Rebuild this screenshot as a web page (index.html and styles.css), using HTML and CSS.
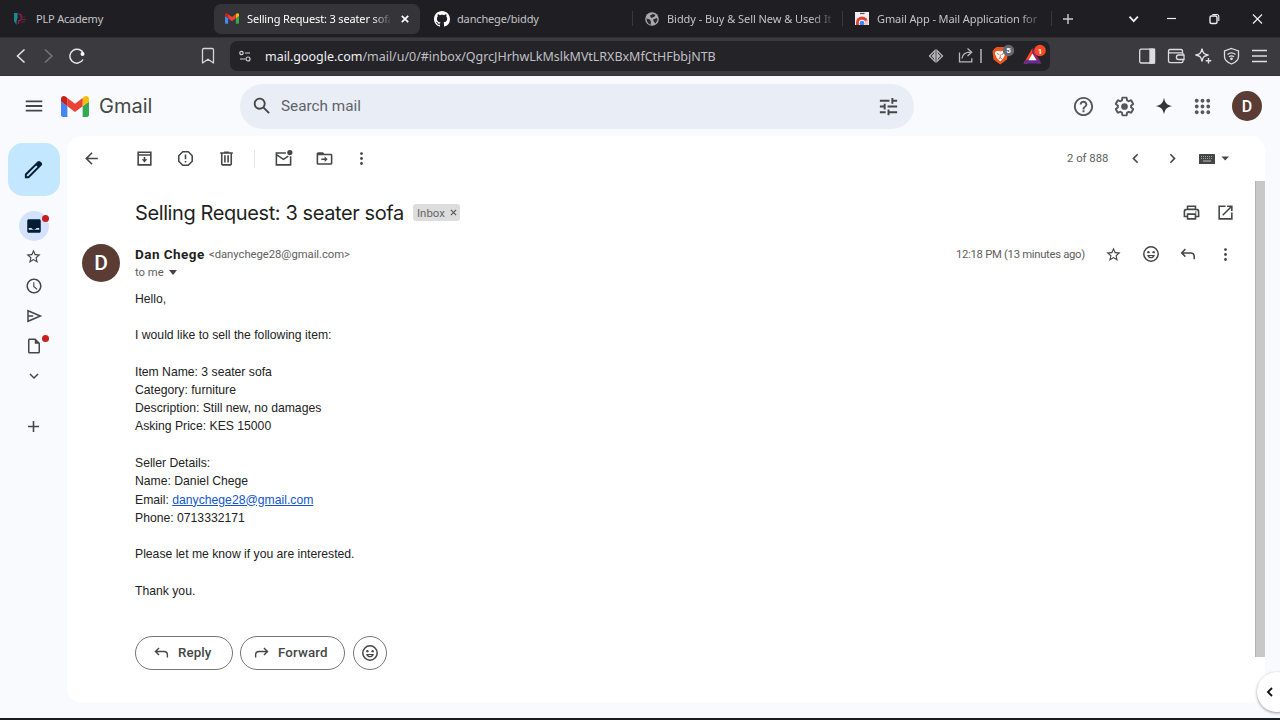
FILE: index.html
```html
<!DOCTYPE html>
<html lang="en">
<head>
<meta charset="utf-8">
<title>Selling Request: 3 seater sofa - Gmail</title>
<link rel="stylesheet" href="styles.css">
</head>
<body>
<svg class="defs" width="0" height="0">
  <symbol id="smile" viewBox="0 0 24 24"><circle cx="12" cy="12" r="9.6" fill="none" stroke="currentColor" stroke-width="2"/><circle cx="8.5" cy="9.5" r="1.6"/><circle cx="15.5" cy="9.5" r="1.6"/><path d="M6.8 13.2h10.4c-.6 2.700-2.700 4.500-5.200 4.500s-4.600-1.800-5.200-4.500zm2.700 1.500c.6.800 1.500 1.300 2.500 1.300s1.900-.5 2.500-1.300z"/></symbol>
  <symbol id="star" viewBox="0 0 24 24"><path d="M22 9.240l-7.190-.62L12 2 9.190 8.630 2 9.240l5.460 4.730L5.820 21 12 17.270 18.180 21l-1.630-7.030L22 9.240zM12 15.400l-3.760 2.270 1-4.280-3.320-2.880 4.380-.38L12 6.100l1.710 4.040 4.380.38-3.320 2.880 1 4.280L12 15.400z"/></symbol>
  <symbol id="more" viewBox="0 0 24 24"><circle cx="12" cy="5" r="2"/><circle cx="12" cy="12" r="2"/><circle cx="12" cy="19" r="2"/></symbol>
  <symbol id="reply" viewBox="0 0 24 24"><path d="M8.500 5.500L3.500 10.500l5 5M4 10.500h11.500c2.800 0 4.800 2 4.800 4.800V19" fill="none" stroke="currentColor" stroke-width="2"/></symbol>
  <symbol id="gmail" viewBox="52 42 88 66"><path fill="#4285f4" d="M58 108h14V74L52 59v43c0 3.320 2.690 6 6 6"/><path fill="#34a853" d="M120 108h14c3.320 0 6-2.690 6-6V59l-20 15"/><path fill="#fbbc04" d="M120 48v26l20-15v-8c0-7.420-8.470-11.650-14.400-7.200"/><path fill="#ea4335" d="M72 74V48l24 18 24-18v26L96 92"/><path fill="#c5221f" d="M52 51v8l20 15V48l-5.600-4.200c-5.940-4.450-14.400-.22-14.400 7.200"/></symbol>
</svg>

<nav class="tabs">
  <div class="tab tab-plp">
    <svg width="14" height="14" viewBox="0 0 14 14"><path d="M1 1h3.600v5L3.500 9v4L1 9z" fill="#1a8a91"/><path d="M5.500 2c4 0 4 6.800 0 6.800V12" fill="none" stroke="#8d1f50" stroke-width="1.400"/><path d="M7 5h5M7 7.500h6M8 10h4" stroke="#6b2146" stroke-width="1"/></svg>
    <span class="tab-title t-plp">PLP Academy</span>
  </div>
  <div class="tab tab-active">
    <svg width="14" height="11"><use href="#gmail"/></svg>
    <span class="tab-title t-mail fade">Selling Request: 3 seater sofa</span>
    <svg class="close" width="8" height="8" viewBox="0 0 8 8"><path d="M.8.8l6.400 6.400M7.200.8L.8 7.200" stroke="#fff" stroke-width="1.700"/></svg>
  </div>
  <div class="tab tab-github">
    <svg width="16" height="16" viewBox="0 0 16 16" fill="#fff"><path d="M8 0C3.580 0 0 3.580 0 8c0 3.540 2.290 6.530 5.470 7.590.4.070.55-.17.55-.38 0-.19-.01-.82-.01-1.490-2.010.37-2.530-.49-2.690-.94-.09-.23-.48-.94-.82-1.130-.28-.15-.68-.52-.01-.53.63-.01 1.080.58 1.230.82.72 1.210 1.870.87 2.330.66.070-.52.280-.87.510-1.070-1.780-.2-3.640-.89-3.640-3.950 0-.87.310-1.590.820-2.150-.08-.2-.36-1.020.08-2.120 0 0 .67-.21 2.200.820.640-.18 1.320-.27 2-.27s1.360.09 2 .27c1.530-1.040 2.200-.82 2.200-.82.440 1.100.160 1.920.080 2.120.510.560.820 1.270.820 2.150 0 3.070-1.870 3.750-3.650 3.950.290.250.540.730.540 1.480 0 1.070-.01 1.930-.01 2.200 0 .21.150.460.550.380A8.010 8.010 0 0 0 16 8c0-4.420-3.580-8-8-8z"/></svg>
    <span class="tab-title t-git">danchege/biddy</span>
  </div>
  <div class="tab tab-biddy">
    <svg width="14" height="14" viewBox="0 0 14 14"><circle cx="7" cy="7" r="6.800" fill="#a9a9ad"/><path d="M1.500 6.500l3.500 1 1 2.500-.5 2.700C3.200 12 1.500 9.800 1.500 6.500zM5 3.500L8 2l2.500 1-1.500 2-3 1zM8 7.500l4-1.500.5 2-2 3.500-1.500-1.500z" fill="#29282d"/></svg>
    <span class="tab-title t-biddy fade">Biddy - Buy &amp; Sell New &amp; Used It</span>
  </div>
  <div class="tab tab-store">
    <svg width="14" height="13" viewBox="0 0 14 13"><path d="M0 0h14v13H0z" fill="#eee"/><path d="M5 1.500h4.500" stroke="#555" stroke-width="1.200"/><path d="M1 13V10.500a6 6 0 0 1 12 0V13z" fill="#db4437"/><path d="M9.500 13l1-4.500H13V13z" fill="#f4c7b5"/><circle cx="7" cy="11" r="3.200" fill="#fff"/><circle cx="7" cy="11.200" r="2.400" fill="#4285f4"/></svg>
    <span class="tab-title t-store fade">Gmail App - Mail Application for</span>
  </div>
  <div class="window-controls">
    <svg width="210" height="16" viewBox="0 0 210 16" fill="none" stroke="#eee" stroke-width="1.400"><path d="M12 8h10M17 3v10" stroke="#ccc"/><path d="M78.500 5.700l4.200 4.500 4.200-4.500" stroke-width="1.800"/><path d="M116 7.500h9" stroke-width="1.200"/><rect x="159" y="5" width="7" height="7.500" rx="1.500"/><path d="M161.300 3.500h4.500c1.300 0 2 .7 2 2V10" stroke-width="1.100"/><path d="M202 3.500l9 9M211 3.500l-9 9" stroke-width="1.200"/></svg>
  </div>
</nav>

<div class="toolbar">
  <svg class="nav-icons" width="90" height="20" viewBox="0 0 90 20" fill="none" stroke="#e7e7e9" stroke-width="1.500"><path d="M24.500 3.500L17.500 10l7 6.500"/><path d="M45 3.500l7 6.500-7 6.500" stroke="#77767b"/><path d="M83.500 8A7 7 0 1 0 83 13.500"/><circle cx="82.500" cy="8" r="2" fill="#fff" stroke="none"/></svg>
  <svg class="bookmark" width="14" height="18" viewBox="0 0 14 18"><path d="M1.500 2.800c0-.8.500-1.300 1.300-1.300h8.400c.8 0 1.300.5 1.300 1.300V16L7 12.200 1.500 16z" fill="none" stroke="#d5d5d8" stroke-width="1.300" stroke-linejoin="round"/></svg>
  <div class="urlbar">
    <svg width="12" height="12" viewBox="0 0 12 12" fill="none" stroke="#d0d0d3" stroke-width="1.200"><circle cx="2.500" cy="3" r="1.700"/><path d="M6 3h5M1 9h5"/><circle cx="9" cy="9" r="2"/></svg>
    <span class="url"><b>mail.google.com</b>/mail/u/0/#inbox/QgrcJHrhwLkMslkMVtLRXBxMfCtHFbbjNTB</span>
    <svg class="url-actions" width="121" height="24" viewBox="0 0 121 24" fill="none" stroke="#b8b8bc" stroke-width="1.300">
      <path d="M7 6.500L1.500 12 7 17.500zM9 6.500l5.500 5.500L9 17.500z" stroke-width="1.300"/><path d="M3.500 12L7 8.500v7zM12.500 12L9 8.500v7z" fill="#b8b8bc" stroke="none"/>
      <path d="M31.500 8.500v9.300h12.300v-3.500M34 14.500c.5-4.500 3-6.300 8.500-6.300M39.500 4.500l4.200 3.700-4.200 3.700"/><path d="M53 5v14" stroke="#ccc"/>
      <path d="M66 5l2.700-2h7L78.500 5l1.500 2.500-1 8-6.800 5-6.700-5-1-8z" fill="#ee5520" stroke="none"/><path d="M67.500 7.500l2.500-.7 2.200.7 2.200-.7 2.400.7.700 2-2 4.500-3.300 3.500-3.400-3.500-2-4.500z" fill="#fff" stroke="none"/><path d="M69 9.500l2 1M75.500 9.500l-2 1M72.200 10.500v3l-1.500 1.500M72.200 13.500l1.500 1.500" stroke="#ee5520" stroke-width="1"/>
      <circle cx="80.500" cy="6.500" r="5.700" fill="#646873" stroke="none"/>
      <path d="M104.500 4L95.500 19.500h4.200l4.800-8z" fill="#ff4724" stroke="none"/><path d="M104.500 4v7.500l4.800 8h4.200z" fill="#9e1f63" stroke="none"/><path d="M95.500 19.500l2.500-3.800h13l2.500 3.800z" fill="#662d91" stroke="none"/><path d="M104.500 9.500l4 6.800h-8z" fill="#fff" stroke="none"/>
      <circle cx="112" cy="6.500" r="5.800" fill="#fb4b26" stroke="none"/>
      <text x="80.500" y="9.200" class="badge-text">5</text><text x="112" y="9.500" class="badge-text">1</text>
    </svg>
  </div>
  <svg class="right-icons" width="130" height="20" viewBox="0 0 130 20" fill="none" stroke="#dedee1" stroke-width="1.300"><rect x=".7" y="3.200" width="14.800" height="13.800" rx="1.500"/><path d="M11 3.200h4.500V17H11z" fill="#dedee1"/><path d="M31 3.500h11c1 0 1.500.5 1.500 1.500v1.800M44 9V7.800c0-.6-.4-1-1-1H31c-2 0-2-3.300 0-3.300M29.500 5v10c0 1 .6 1.700 1.700 1.700H42.500c1 0 1.500-.6 1.500-1.700v-1.500M39.500 9H45v4.500h-5.500c-2.800 0-2.800-4.500 0-4.500z"/><path d="M63 2.500c.8 4.500 2 5.700 6.500 6.500-4.500.8-5.700 2-6.500 6.500-.8-4.500-2-5.700-6.500-6.500 4.500-.8 5.700-2 6.500-6.500zM69.500 12v5.500M66.700 14.800h5.600" stroke-width="1.400"/><path d="M92.500 2.500l7 2.500v5.500c0 3-2.500 5.700-7 7.500-4.500-1.800-7-4.500-7-7.500V5z"/><path d="M88.500 8.500c2.400-2 5.600-2 8 0M90 10.800c1.500-1.200 3.500-1.200 5 0"/><circle cx="92.500" cy="12.800" r=".7" fill="#dedee1"/><path d="M113 4.500h15M113 10h15M113 15.500h15"/></svg>
</div>

<div class="app">
  <header class="gmail-header">
    <svg class="ico menu" width="22" height="22" viewBox="0 0 24 24"><path d="M3 18h18v-2H3v2zm0-5h18v-2H3v2zm0-7v2h18V6H3z"/></svg>
    <svg class="logo" width="28" height="21"><use href="#gmail"/></svg>
    <span class="brand">Gmail</span>
    <div class="search">
      <svg class="ico" width="22" height="22" viewBox="0 0 24 24"><path d="M20.490 19l-5.730-5.730C15.530 12.200 16 10.910 16 9.500 16 5.910 13.090 3 9.500 3S3 5.910 3 9.500 5.910 16 9.500 16c1.410 0 2.700-.47 3.770-1.240L19 20.490 20.490 19zM5 9.500C5 7.010 7.010 5 9.500 5S14 7.010 14 9.500 11.990 14 9.500 14 5 11.990 5 9.500z"/></svg>
      <span class="placeholder">Search mail</span>
      <svg class="ico" width="23" height="23" viewBox="0 0 24 24"><path d="M3 17v2h6v-2H3zM3 5v2h10V5H3zm10 16v-2h8v-2h-8v-2h-2v6h2zM7 9v2H3v2h4v2h2V9H7zm14 4v-2H11v2h10zm-6-4h2V7h4V5h-4V3h-2v6z"/></svg>
    </div>
    <div class="header-icons">
      <svg class="ico" width="23" height="23" viewBox="0 0 24 24"><path d="M11 18h2v-2h-2v2zm1-16C6.480 2 2 6.480 2 12s4.480 10 10 10 10-4.480 10-10S17.520 2 12 2zm0 18c-4.410 0-8-3.590-8-8s3.590-8 8-8 8 3.590 8 8-3.590 8-8 8zm0-14c-2.210 0-4 1.790-4 4h2c0-1.100.9-2 2-2s2 .9 2 2c0 2-3 1.750-3 5h2c0-2.250 3-2.500 3-5 0-2.210-1.790-4-4-4z"/></svg>
      <svg class="ico" width="23" height="23" viewBox="0 0 24 24"><path d="M13.850 22.250h-3.700c-.74 0-1.360-.54-1.450-1.270l-.27-1.890c-.27-.14-.53-.29-.79-.46l-1.800.72c-.7.260-1.470-.03-1.810-.65L2.200 15.530c-.35-.66-.2-1.440.36-1.880l1.530-1.190c-.01-.15-.02-.3-.02-.46 0-.15.01-.31.02-.46l-1.520-1.190c-.59-.45-.74-1.260-.37-1.880l1.850-3.190c.34-.62 1.110-.9 1.790-.63l1.810.73c.26-.17.52-.32.78-.46l.27-1.910c.09-.7.71-1.250 1.440-1.250h3.700c.74 0 1.360.54 1.450 1.270l.27 1.890c.27.14.53.29.79.46l1.800-.72c.71-.26 1.480.03 1.820.65l1.840 3.180c.36.66.2 1.440-.36 1.880l-1.520 1.190c.01.15.02.3.02.46s-.01.31-.02.46l1.520 1.190c.56.45.72 1.230.37 1.860l-1.860 3.220c-.34.62-1.110.9-1.800.63l-1.800-.72c-.26.17-.52.32-.78.46l-.27 1.910c-.1.680-.72 1.220-1.460 1.220zm-3.230-2h2.760l.37-2.550.53-.22c.44-.18.88-.44 1.340-.78l.45-.34 2.380.96 1.380-2.400-2.030-1.580.07-.56c.03-.26.06-.51.06-.78s-.03-.53-.06-.78l-.07-.56 2.030-1.580-1.390-2.400-2.390.96-.45-.35c-.42-.32-.87-.58-1.330-.77l-.52-.22-.37-2.550h-2.760l-.37 2.550-.53.21c-.44.19-.88.44-1.340.79l-.45.33-2.380-.95-1.390 2.390 2.030 1.580-.07.56a7 7 0 0 0-.06.79c0 .26.02.53.06.78l.07.56-2.030 1.580 1.380 2.400 2.390-.96.45.35c.43.33.86.58 1.330.77l.53.22.38 2.550z"/><circle cx="12" cy="12" r="3.500"/></svg>
      <svg class="ico dark" width="20" height="20" viewBox="0 0 24 24"><path d="M12 2c1.200 6.500 3.500 8.800 10 10-6.500 1.200-8.800 3.500-10 10-1.200-6.500-3.500-8.800-10-10 6.500-1.200 8.800-3.500 10-10z"/></svg>
      <svg class="ico" width="23" height="23" viewBox="0 0 24 24"><path d="M6 8c1.100 0 2-.9 2-2s-.9-2-2-2-2 .9-2 2 .9 2 2 2zm6 12c1.100 0 2-.9 2-2s-.9-2-2-2-2 .9-2 2 .9 2 2 2zm-6 0c1.100 0 2-.9 2-2s-.9-2-2-2-2 .9-2 2 .9 2 2 2zm0-6c1.100 0 2-.9 2-2s-.9-2-2-2-2 .9-2 2 .9 2 2 2zm6 0c1.100 0 2-.9 2-2s-.9-2-2-2-2 .9-2 2 .9 2 2 2zm4-8c0 1.100.9 2 2 2s2-.9 2-2-.9-2-2-2-2 .9-2 2zm-4 2c1.100 0 2-.9 2-2s-.9-2-2-2-2 .9-2 2 .9 2 2 2zm6 6c1.100 0 2-.9 2-2s-.9-2-2-2-2 .9-2 2 .9 2 2 2zm0 6c1.100 0 2-.9 2-2s-.9-2-2-2-2 .9-2 2 .9 2 2 2z"/></svg>
      <span class="avatar small">D</span>
    </div>
  </header>

  <div class="workspace">
    <aside class="rail">
      <div class="compose"><svg width="23" height="23" viewBox="0 0 24 24"><path d="M20.410 4.940l-1.350-1.350c-.78-.78-2.050-.78-2.830 0L3 16.820V21h4.180L20.410 7.770c.79-.78.79-2.050 0-2.830zm-14 14.120L5 19v-1.360l9.820-9.820 1.410 1.410-9.820 9.830z"/></svg></div>
      <div class="rail-item selected"><svg width="18" height="18" viewBox="0 0 24 24"><path d="M19 3H5c-1.100 0-2 .9-2 2v14c0 1.100.9 2 2 2h14c1.100 0 2-.9 2-2V5c0-1.100-.9-2-2-2zm0 11h-4c0 1.660-1.350 3-3 3s-3-1.340-3-3H5V5h14v9z" fill="none"/><path d="M5 3h14c1.100 0 2 .9 2 2v14c0 1.100-.9 2-2 2H5c-1.100 0-2-.9-2-2V5c0-1.100.9-2 2-2zM5 14.500V17h14v-2.500h-3.500c-.8 1.200-2 2-3.500 2s-2.700-.8-3.500-2z" fill-rule="evenodd"/></svg><i class="dot"></i></div>
      <div class="rail-item"><svg width="17" height="17"><use href="#star"/></svg></div>
      <div class="rail-item"><svg width="18" height="18" viewBox="0 0 24 24"><path d="M11.990 2C6.470 2 2 6.480 2 12s4.470 10 9.990 10C17.520 22 22 17.520 22 12S17.520 2 11.990 2zM12 20c-4.420 0-8-3.580-8-8s3.580-8 8-8 8 3.580 8 8-3.580 8-8 8zm.5-13H11v6l4.500 4 1-1.200-4-3.500z"/></svg></div>
      <div class="rail-item"><svg width="18" height="18" viewBox="0 0 24 24"><path d="M4 5l16.500 7L4 19zM4 12h7" fill="none" stroke="currentColor" stroke-width="2"/></svg></div>
      <div class="rail-item"><svg width="18" height="18" viewBox="0 0 24 24"><path d="M14 2H6c-1.100 0-2 .9-2 2v16c0 1.100.9 2 2 2h12c1.100 0 2-.9 2-2V8l-6-6zM6 20V4h7v5h5v11H6z"/></svg><i class="dot"></i></div>
      <div class="rail-item"><svg width="18" height="18" viewBox="0 0 24 24"><path d="M7.410 8.590L12 13.170l4.590-4.580L18 10l-6 6-6-6z"/></svg></div>
      <div class="rail-item plus"><svg width="19" height="19" viewBox="0 0 24 24"><path d="M19 13h-6v6h-2v-6H5v-2h6V5h2v6h6z"/></svg></div>
    </aside>

    <main class="card">
      <div class="actions">
        <svg width="19" height="19" viewBox="0 0 24 24"><path d="M20 11H7.830l5.590-5.590L12 4l-8 8 8 8 1.410-1.410L7.830 13H20z"/></svg>
        <svg width="19" height="19" viewBox="0 0 24 24"><path d="M4 4h16v16H4zM4 7.500h16" fill="none" stroke="currentColor" stroke-width="2"/><path d="M11 10h2v3h2.500L12 17l-3.500-4H11z"/></svg>
        <svg width="19" height="19" viewBox="0 0 24 24"><path d="M8.500 3.500h7l5 5v7l-5 5h-7l-5-5v-7z" fill="none" stroke="currentColor" stroke-width="2" stroke-linejoin="round"/><path d="M11 7h2v6h-2zM11 15h2v2h-2z"/></svg>
        <svg width="19" height="19" viewBox="0 0 24 24"><path d="M15 4V3H9v1H4v2h1v13c0 1.100.9 2 2 2h10c1.100 0 2-.9 2-2V6h1V4h-5zm2 15H7V6h10v13zM9 8h2v9H9zm4 0h2v9h-2z"/></svg>
        <i class="divider"></i>
        <svg width="19" height="19" viewBox="0 0 24 24"><path d="M15 5H3v15h18V9M3 7l9 6 6-4" fill="none" stroke="currentColor" stroke-width="2"/><circle cx="20" cy="4.500" r="3.300"/></svg>
        <svg width="19" height="19" viewBox="0 0 24 24"><path d="M20 6h-8l-2-2H4c-1.100 0-2 .9-2 2v12c0 1.100.9 2 2 2h16c1.100 0 2-.9 2-2V8c0-1.100-.9-2-2-2zm0 12H4V8h16v10zM12.200 9.500l3.800 3.500-3.800 3.500v-2.600H8v-1.800h4.200z"/></svg>
        <svg width="17" height="17"><use href="#more"/></svg>
        <span class="count">2 of 888</span>
        <svg class="prev" width="19" height="19" viewBox="0 0 24 24"><path d="M15.410 7.410L14 6l-6 6 6 6 1.410-1.410L10.830 12z"/></svg>
        <svg class="next" width="19" height="19" viewBox="0 0 24 24"><path d="M8.590 7.410L10 6l6 6-6 6-1.410-1.410L13.170 12z"/></svg>
        <svg class="keyboard" width="30" height="10" viewBox="0 0 30 10"><rect width="16" height="10" rx=".5"/><path d="M2 2.500h12M2 4.500h12" stroke="#999" stroke-width="1" stroke-dasharray="1 1"/><path d="M4 7h8" stroke="#bbb"/><path d="M22.500 2.500h7.500L26.200 6.500z"/></svg>
      </div>

      <div class="subject-row">
        <h1>Selling Request: 3 seater sofa</h1>
        <span class="chip"><span>Inbox</span><svg width="7" height="7" viewBox="0 0 8 8"><path d="M1 1l6 6M7 1L1 7" stroke="#555" stroke-width="1.300"/></svg></span>
        <svg class="print" width="19" height="19" viewBox="0 0 24 24"><path d="M7 8V4h10v4M6 17H3v-6c0-1.700 1-3 3-3h12c2 0 3 1.300 3 3v6h-3M7 14h10v6H7z" fill="none" stroke="currentColor" stroke-width="2"/><circle cx="17.500" cy="11.300" r="1"/></svg>
        <svg class="popout" width="19" height="19" viewBox="0 0 24 24"><path d="M19 19H5V5h7V3H3v18h18v-9h-2zM14 3v2h3.590l-9.830 9.830 1.410 1.410L19 6.410V10h2V3z"/></svg>
      </div>

      <article class="message">
        <span class="avatar">D</span>
        <div class="content">
          <div class="sender-row">
            <span class="sender">Dan Chege</span>
            <span class="address">&lt;danychege28@gmail.com&gt;</span>
            <span class="time">12:18 PM (13 minutes ago)</span>
            <svg class="s1" width="17" height="17"><use href="#star"/></svg>
            <svg class="s2" width="18" height="18"><use href="#smile"/></svg>
            <svg class="s3" width="18" height="18"><use href="#reply"/></svg>
            <svg class="s4" width="17" height="17"><use href="#more"/></svg>
          </div>
          <div class="to"><span>to me</span><i class="caret"></i></div>
          <div class="body">Hello,<br><br>I would like to sell the following item:<br><br>Item Name: 3 seater sofa<br>Category: furniture<br>Description: Still new, no damages<br>Asking Price: KES 15000<br><br>Seller Details:<br>Name: Daniel Chege<br>Email: <a>danychege28@gmail.com</a><br>Phone: 0713332171<br><br>Please let me know if you are interested.<br><br>Thank you.</div>
          <div class="buttons">
            <span class="pill reply"><svg width="17" height="17"><use href="#reply"/></svg><span>Reply</span></span>
            <span class="pill forward"><svg class="flip" width="17" height="17"><use href="#reply"/></svg><span>Forward</span></span>
            <span class="pill emoji"><svg width="18" height="18"><use href="#smile"/></svg></span>
          </div>
        </div>
      </article>
      <i class="scrollbar"></i>
    </main>
  </div>
  <div class="side-toggle"><svg width="9" height="10" viewBox="0 0 9 10"><path d="M7 1L3 5l4 4" fill="none" stroke="#111" stroke-width="1.900"/></svg></div>
</div>
</body>
</html>
```
FILE: styles.css
```css
* { box-sizing: border-box; }
body { margin: 0; width: 1280px; height: 720px; overflow: hidden; font-family: Roboto, "Liberation Sans", sans-serif; background: #1c1c1e; display: flex; flex-direction: column; }
svg { display: block; flex: none; }
svg:not([fill]) { fill: currentColor; }
span { white-space: nowrap; }
.defs { position: absolute; }

.tabs { height: 38px; flex: none; background: #1f1e23; display: grid; grid-template-columns: 214px 206px 212px 210px 209px 1fr; align-items: center; font-family: "Noto Sans", "Open Sans", sans-serif; font-size: 11px; color: #c4c4c8; border-bottom: 1px solid #302f34; }
.tab { height: 30px; display: flex; align-items: center; }
.tab-title { padding-bottom: 1px; }
.tab-plp { padding-left: 13px; }
.tab-plp .tab-title { margin-left: 9px; letter-spacing: -.2px; }
.tab-active { background: #353439; border-radius: 7px; padding-left: 11px; color: #fff; }
.tab-active .tab-title { margin-left: 8px; width: 143px; letter-spacing: -.15px; }
.close { margin-left: 11px; }
.tab-github { padding-left: 14px; }
.tab-github .tab-title { margin-left: 7px; letter-spacing: -.15px; }
.tab-biddy { padding-left: 13px; }
.tab-biddy .tab-title { margin-left: 8px; width: 166px; letter-spacing: -.05px; }
.tab-store { padding-left: 13px; }
.tab-store .tab-title { margin-left: 8px; width: 164px; letter-spacing: -.1px; }
.tab-biddy, .tab-store, .window-controls { background: linear-gradient(#39383d, #39383d) 0 50% / 1px 15px no-repeat; }
.fade { overflow: hidden; -webkit-mask-image: linear-gradient(90deg, #000 87%, #0002); mask-image: linear-gradient(90deg, #000 87%, #0002); }
.window-controls { height: 30px; display: flex; align-items: center; }
.window-controls svg { overflow: visible; }

.toolbar { height: 38px; flex: none; background: #3b3a3f; display: flex; align-items: center; border-bottom: 1px solid #343236; padding-bottom: 1px; }
.bookmark { margin-left: 111px; }
.urlbar { margin-left: 15px; width: 820px; height: 30px; border-radius: 7px; background: #242328; display: flex; align-items: center; padding-left: 9px; }
.url { margin-left: 14px; width: 664px; font: 12.500px "Noto Sans", sans-serif; letter-spacing: -.03px; color: #c0c0c4; }
.url b { font-weight: 400; color: #efeff1; }
.url-actions { margin-left: -1px; }
.badge-text { font: 700 8px Roboto, sans-serif; fill: #fff; stroke: none; text-anchor: middle; }
.right-icons { margin-left: 89px; }

.app { height: 642px; flex: none; background: #f8fafd; position: relative; color: #444746; }
.gmail-header { height: 60px; display: flex; align-items: center; }
.menu { margin-left: 23px; }
.logo { margin-left: 16px; }
.brand { margin-left: 10px; width: 140px; font: 400 20px Inter, sans-serif; color: #444746; }
.search { width: 674px; height: 45px; margin-left: 1px; border-radius: 23px; background: #e9eef6; display: flex; align-items: center; padding-left: 11px; }
.placeholder { margin-left: 8px; width: 596px; font-size: 15.300px; color: #5f6368; }
.header-icons { display: flex; align-items: center; margin-left: 158px; }
.header-icons .ico { margin-right: 18px; color: #55585b; }
.header-icons .dark { color: #333537; margin-right: 17px; }
.avatar { width: 38px; height: 38px; border-radius: 50%; background: #5a3c35; color: #fff; display: grid; place-items: center; font: 500 21px Roboto, sans-serif; flex: none; }
.avatar.small { width: 30px; height: 30px; font-size: 16px; }

.workspace { display: flex; height: 567px; }
.rail { width: 67px; display: flex; flex-direction: column; align-items: center; padding-top: 7px; }
.compose { width: 52px; height: 53px; border-radius: 15px; background: #c2e7ff; color: #001d35; display: grid; place-items: center; margin-bottom: 15px; }
.rail-item { width: 30px; height: 30px; display: grid; place-items: center; position: relative; flex: none; }
.rail-item.selected { background: #d3e3fd; border-radius: 50%; color: #001d35; }
.rail-item.plus { margin-top: 20px; }
.dot { position: absolute; width: 7px; height: 7px; border-radius: 50%; background: #c5221f; right: 0; top: 4px; }

.card { width: 1198px; background: #fff; border-radius: 15px; position: relative; }
.actions { height: 45px; display: flex; align-items: center; padding-left: 15px; }
.actions svg:nth-child(2) { margin-left: 34px; }
.actions svg:nth-child(3), .actions svg:nth-child(4) { margin-left: 22px; }
.divider { width: 1px; height: 18px; background: #e3e3e3; margin: 0 19px 0 18px; }
.actions svg:nth-child(7) { margin-left: 22px; }
.actions svg:nth-child(8) { margin-left: 19px; }
.count { margin-left: 697px; width: 59px; font-size: 11.300px; color: #5e5e5e; }
.next { margin-left: 18px; }
.keyboard { margin-left: 17px; margin-top: 1px; }
.subject-row { height: 63px; display: flex; align-items: center; padding-left: 68px; }
h1 { margin: 0; font: 400 20px Inter, sans-serif; letter-spacing: -.4px; color: #1f1f1f; width: 278px; white-space: nowrap; }
.chip { height: 17px; width: 47px; border-radius: 3px; background: #ddd; color: #666; font-size: 11.400px; display: flex; align-items: center; padding-left: 4px; gap: 5px; }
.print { margin-left: 722px; }
.popout { margin-left: 15px; }
.message { display: flex; padding-left: 15px; }
.message > .avatar { margin-top: 0; }
.content { margin-left: 15px; width: 1115px; }
.sender-row { height: 20px; display: flex; align-items: center; }
.sender { font-size: 13.500px; font-weight: 700; letter-spacing: .45px; color: #1f1f1f; width: 74px; }
.address { font-size: 11.300px; color: #5e5e5e; width: 747px; letter-spacing: -.05px; }
.time { font-size: 11.300px; color: #5e5e5e; width: 149px; letter-spacing: -.3px; }
.s2 { margin-left: 20px; }
.s3 { margin-left: 19px; }
.s4 { margin-left: 20px; }
.to { height: 17px; display: flex; align-items: center; font-size: 11.300px; color: #5e5e5e; }
.caret { border: 4px solid transparent; border-top: 5px solid #444; border-bottom: 0; margin-left: 5px; }
.body { margin-top: 8.600px; font: 12.200px/18.270px "Liberation Sans", Arial, sans-serif; color: #222; }
.body a { color: #15c; text-decoration: underline; }
.buttons { display: flex; gap: 7.500px; margin-top: 35.400px; }
.pill { height: 34px; border: 1px solid #747775; border-radius: 17px; display: flex; align-items: center; font-size: 13.300px; font-weight: 500; letter-spacing: .12px; color: #444746; }
.reply { width: 97.500px; padding-left: 17px; gap: 8px; }
.forward { width: 105px; padding-left: 12px; gap: 8px; }
.emoji { width: 34px; justify-content: center; }
.flip { transform: scaleX(-1); }
.scrollbar { position: absolute; right: 0; top: 45px; width: 10px; height: 476px; background: #c8c8c8; border-left: 1px solid #b3b3b3; }
.side-toggle { position: absolute; left: 1257px; top: 596px; width: 40px; height: 40px; border-radius: 50%; background: #fff; box-shadow: 0 1px 3px #0006; display: flex; align-items: center; padding-left: 8px; }
```
